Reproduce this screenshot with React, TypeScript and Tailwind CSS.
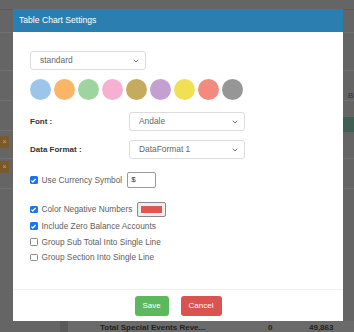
import { ChevronDown } from 'lucide-react';

const swatches = ['#9cc5ea', '#fbb566', '#9dd49f', '#f6b0d1', '#c6aa5e', '#c3a0d0', '#f1e055', '#f28a7f', '#969696'];

function Select({ value, width }: { value: string; width: string }) {
  return (
    <div className={`${width} h-[19px] border border-[#dcdcdc] rounded-[3px] bg-white flex items-center justify-between pl-[9px] pr-[5px] text-[8.4px] text-[#666]`}>
      <span>{value}</span>
      <ChevronDown className="w-[8px] h-[8px] text-[#555]" strokeWidth={2.5} />
    </div>
  );
}

function Check({ checked, label }: { checked: boolean; label: string }) {
  return (
    <div className="flex items-center gap-[4px]">
      {checked ? (
        <span className="w-[7.5px] h-[7.5px] rounded-[1.5px] bg-[#1a73e8] flex items-center justify-center">
          <svg viewBox="0 0 10 10" className="w-[7px] h-[7px]">
            <path d="M2 5.2l2 2 4-4.4" fill="none" stroke="white" strokeWidth={1.8} />
          </svg>
        </span>
      ) : (
        <span className="w-[7.5px] h-[7.5px] rounded-[1.5px] border border-[#8a8a8a] bg-white" />
      )}
      <span className="text-[8.3px] text-[#606060]">{label}</span>
    </div>
  );
}

export default function App() {
  return (
    <div className="relative w-[354px] h-[332px] overflow-hidden bg-[#656565] font-['Liberation_Sans',Arial,sans-serif]">
      {/* page behind the overlay */}
      <div className="flex flex-col">
        <div className="h-[10px] border-b border-[#5a5a5a]" />
        <div className="h-[23px] border-b border-[#707070]" />
        <div className="h-[38px] border-b border-[#707070]" />
        <div className="h-[30px] border-b border-[#707070]" />
        <div className="h-[30px] border-b border-[#707070]" />
        <div className="h-[28px] border-b border-[#707070]" />
        <div className="h-[30px] border-b border-[#707070]" />
      </div>
      <div className="absolute left-0 top-[136px] w-[9px] h-[12px] bg-[#7a5a2a] text-[7px] text-[#c9a77a] flex items-center justify-center">×</div>
      <div className="absolute left-0 top-[161px] w-[9px] h-[12px] bg-[#7a5a2a] text-[7px] text-[#c9a77a] flex items-center justify-center">×</div>
      <div className="absolute left-[348px] top-[90px] text-[8px] text-[#333]">B</div>
      <div className="absolute left-[343px] top-[117px] w-[11px] h-[15px] bg-[#3f5f52]" />
      <div className="absolute left-[60px] top-[321px] w-[10px] h-[11px] bg-[#5a5a5a]" />
      <div className="absolute left-[68px] top-[321px] right-0 h-[13px] bg-[#6a6a6a] flex items-center text-[8px] font-bold text-[#1f1f1f]">
        <span className="ml-[32px] w-[168px]">Total Special Events Reve...</span>
        <span className="w-[41px]">0</span>
        <span>49,863</span>
      </div>

      {/* cursor */}
      <svg viewBox="0 0 12 18" className="absolute left-[333px] top-[95px] w-[8px] h-[12px]">
        <path d="M1 1v14l3.5-3.5 2.5 5.5 2-1-2.5-5.2h5z" fill="#f5f5f5" stroke="#555" strokeWidth={1} />
      </svg>

      {/* modal */}
      <div className="absolute left-[13px] top-[9px] w-[330px] h-[312px] bg-white flex flex-col">
        <div className="h-[23px] bg-[#2b7fb0] flex items-center px-[6px] text-[8.6px] text-white">Table Chart Settings</div>

        <div className="flex-1 flex flex-col px-[17px] pt-[19px]">
          <Select value="standard" width="w-[116px]" />

          <div className="flex gap-[3px] mt-[9px]">
            {swatches.map((c) => (
              <span key={c} className="w-[21px] h-[21px] rounded-full" style={{ backgroundColor: c }} />
            ))}
          </div>

          <div className="flex items-center mt-[12px]">
            <span className="w-[99px] text-[8px] font-bold text-[#333]">Font :</span>
            <Select value="Andale" width="w-[116px]" />
          </div>
          <div className="flex items-center mt-[9px]">
            <span className="w-[99px] text-[8px] font-bold text-[#333]">Data Format :</span>
            <Select value="DataFormat 1" width="w-[116px]" />
          </div>

          <div className="flex items-center mt-[13px] h-[16px]">
            <Check checked label="Use Currency Symbol" />
            <div className="ml-[5px] w-[29px] h-[16px] border border-[#999] rounded-[2px] text-[8px] text-[#333] pl-[3px] flex items-center">$</div>
          </div>

          <div className="flex items-center mt-[14px] h-[15px]">
            <Check checked label="Color Negative Numbers" />
            <div className="ml-[5px] w-[29px] h-[15px] border border-[#888] rounded-[2px] bg-[#eee] p-[3px]">
              <div className="w-full h-full bg-[#e05656]" />
            </div>
          </div>

          <div className="flex flex-col mt-[1px]">
            <div className="h-[16px] flex items-center"><Check checked label="Include Zero Balance Accounts" /></div>
            <div className="h-[16px] flex items-center"><Check checked={false} label="Group Sub Total Into Single Line" /></div>
            <div className="h-[15px] flex items-center"><Check checked={false} label="Group Section Into Single Line" /></div>
          </div>
        </div>

        <div className="h-[32px] border-t border-[#f0f0f0] flex justify-center gap-[12px] pt-[6px]">
          <button className="w-[34px] h-[20px] rounded-[3px] bg-[#5cb85c] text-[8px] text-white">Save</button>
          <button className="w-[41px] h-[20px] rounded-[3px] bg-[#d9534f] text-[8px] text-white">Cancel</button>
        </div>
      </div>
    </div>
  );
}
